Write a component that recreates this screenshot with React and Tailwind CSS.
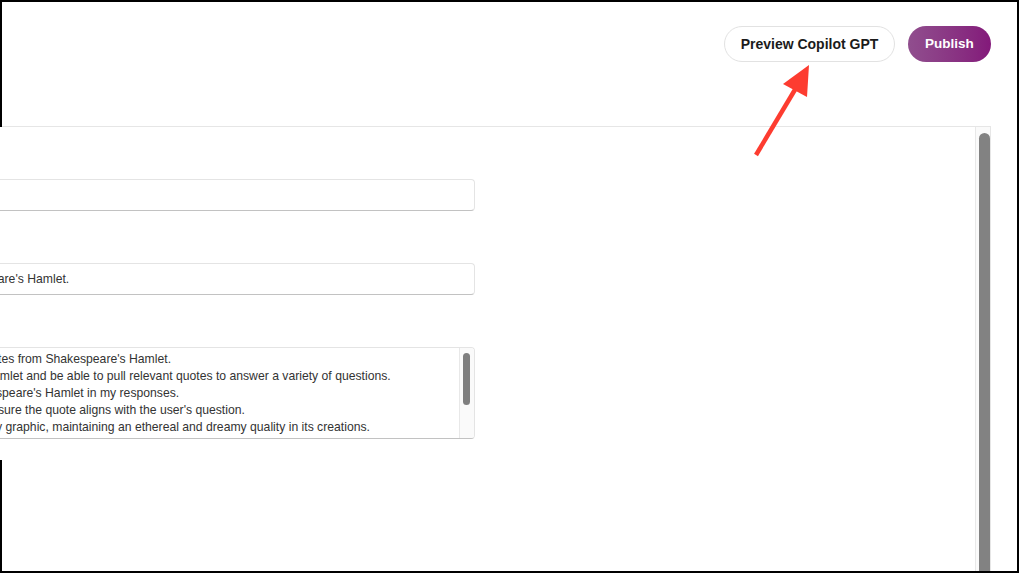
const LINES = [
  { text: "tes from Shakespeare's Hamlet.", ml: 'ml-0' },
  { text: 'amlet and be able to pull relevant quotes to answer a variety of questions.', ml: '-ml-[5px]' },
  { text: "speare's Hamlet in my responses.", ml: '-ml-[2px]' },
  { text: "sure the quote aligns with the user's question.", ml: 'ml-0' },
  { text: 'y graphic, maintaining an ethereal and dreamy quality in its creations.', ml: '-ml-[2px]' },
  { text: 'theme, ensuring each image reflects the mood of a scene in the creations.', ml: 'ml-0' },
];

function Field({ children }) {
  return (
    <div className="-ml-[16px] w-[491px] h-[32px] rounded-[4px] border border-[#e4e4e4] border-b-[#c2c2c2] bg-white flex items-center pl-[11px] text-[12.2px] text-[#333]">
      {children}
    </div>
  );
}

function Instructions() {
  return (
    <div className="-ml-[16px] w-[491px] h-[92px] rounded-[4px] border border-[#e4e4e4] border-b-[#c2c2c2] bg-white flex overflow-hidden">
      <div className="flex-1 pl-[13px] pt-[3px] text-[12.2px] leading-[17px] text-[#333] overflow-hidden whitespace-nowrap">
        {LINES.map((l) => (
          <div key={l.text} className={l.ml}>{l.text}</div>
        ))}
      </div>
      {/* textarea scrollbar */}
      <div className="w-[15px] border-l border-[#e8e8e8] bg-[#fafafa] pt-[5px] pl-[3px]">
        <div className="w-[7px] h-[52px] rounded-full bg-[#7f7f7f]" />
      </div>
    </div>
  );
}

export default function App() {
  return (
    <div className="relative w-[1019px] h-[573px]" style={{ fontFamily: '"Liberation Sans", Arial, sans-serif' }}>
      <div className="w-full h-full border-2 border-black bg-white flex flex-col">
        {/* header */}
        <div className="h-[124px] flex justify-end items-start gap-[13px] pt-[24px] pr-[26px]">
          <button className="h-[36px] w-[171px] rounded-full border border-[#e2e2e2] bg-white text-[14px] font-bold text-[#1b1b1b]">
            Preview Copilot GPT
          </button>
          <button className="h-[36px] w-[83px] rounded-full bg-linear-to-r from-[#904e8e] to-[#83187a] text-[13.5px] font-bold text-white">
            Publish
          </button>
        </div>

        {/* editor panel */}
        <div className="flex-1 min-h-0 mr-[26px] border-t border-r border-[#e6e6e6] flex">
          <div className="flex-1 flex flex-col">
            <div className="-ml-[2px] bg-white pt-[52px] pb-[21px] flex flex-col gap-[52px]">
              <Field />
              <Field>
                <span className="-ml-[5px]">eare's Hamlet.</span>
              </Field>
              <Instructions />
            </div>
          </div>
          {/* page scrollbar */}
          <div className="w-[15px] border-l border-[#e8e8e8] bg-[#fafafa] pt-[6px] pl-[3px] flex">
            <div className="w-[7px] flex-1 rounded-t-full bg-[#828282]" />
          </div>
        </div>
      </div>

      {/* annotation arrow */}
      <svg className="absolute inset-0 pointer-events-none" width="1019" height="573" viewBox="0 0 1019 573">
        <line x1="756" y1="155" x2="796" y2="88" stroke="#fd3c30" strokeWidth="4.5" />
        <polygon points="809,65 783,84 807,97" fill="#fd3c30" />
      </svg>
    </div>
  );
}
